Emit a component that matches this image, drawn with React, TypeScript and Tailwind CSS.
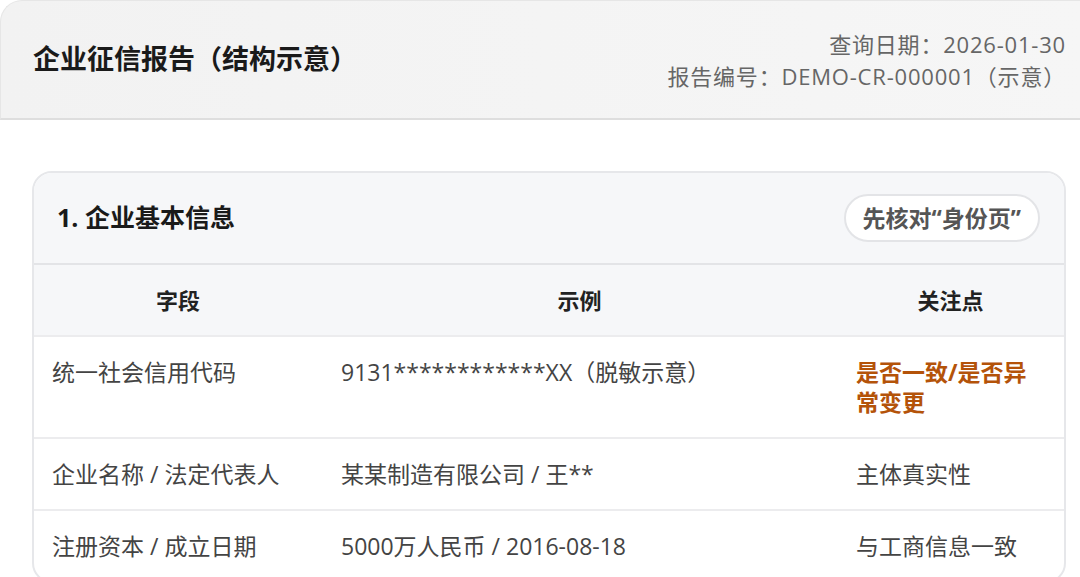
const rows = [
  {
    field: "统一社会信用代码",
    sample: "9131************XX（脱敏示意）",
    focus: "是否一致/是否异常变更",
    hot: true,
  },
  {
    field: "企业名称 / 法定代表人",
    sample: "某某制造有限公司 / 王**",
    focus: "主体真实性",
    hot: false,
  },
  {
    field: "注册资本 / 成立日期",
    sample: "5000万人民币 / 2016-08-18",
    focus: "与工商信息一致",
    hot: false,
  },
];

export default function App() {
  return (
    <div
      className="w-[1080px] h-[577px] overflow-hidden bg-white"
      style={{ fontFamily: '"Open Sans", "Noto Sans CJK SC", sans-serif' }}
    >
      {/* top header */}
      <div className="h-[120px] flex items-center justify-between pl-[32px] pr-[14px] bg-gradient-to-r from-[#f2f2f2] to-[#f6f6f6] border-b-2 border-[#dedede] rounded-tl-[22px] border-l border-t border-l-[#e6e6e6] border-t-[#e6e6e6]">
        <h1 className="text-[27px] font-bold text-[#1a1a1a]">
          企业征信报告（结构示意）
        </h1>
        <div className="text-right text-[22px] leading-[32px] text-[#666] pt-[1px] tracking-[0.8px]">
          <div>查询日期：2026-01-30</div>
          <div>报告编号：DEMO-CR-000001（示意）</div>
        </div>
      </div>

      <div className="pt-[51px] pl-[32px] pr-[14px]">
        <div className="border-2 border-[#e6e7ea] rounded-[20px] overflow-hidden">
          {/* card header */}
          <div className="h-[90px] flex items-center justify-between pl-[23px] pr-[24px] bg-[#f6f7f9]">
            <h2 className="text-[25px] font-bold text-[#1a1a1a]">1. 企业基本信息</h2>
            <span className="h-[48px] flex items-center px-[17px] rounded-full bg-white border-2 border-[#e3e4e7] text-[23px] font-bold text-[#555]">
              先核对“身份页”
            </span>
          </div>

          {/* table head */}
          <div className="grid grid-cols-[288px_515px_1fr] h-[72px] items-center bg-[#f6f7f9] border-t-2 border-[#e3e4e7] text-[22px] font-bold text-[#222]">
            <div className="text-center">字段</div>
            <div className="text-center">示例</div>
            <div className="text-center">关注点</div>
          </div>

          {rows.map((r) => (
            <div
              key={r.field}
              className="grid grid-cols-[288px_515px_1fr] border-t-2 border-[#ececee] text-[23px] leading-[30px] text-[#444]"
            >
              <div className="pl-[18px] pr-4 py-[20px]">{r.field}</div>
              <div className="pl-[19px] pr-4 py-[20px]">{r.sample}</div>
              <div
                className={
                  r.hot
                    ? "pl-[19px] pr-[28px] py-[20px] font-bold text-[#b45309]"
                    : "pl-[19px] pr-[28px] py-[20px]"
                }
              >
                {r.focus}
              </div>
            </div>
          ))}
        </div>
      </div>
    </div>
  );
}
